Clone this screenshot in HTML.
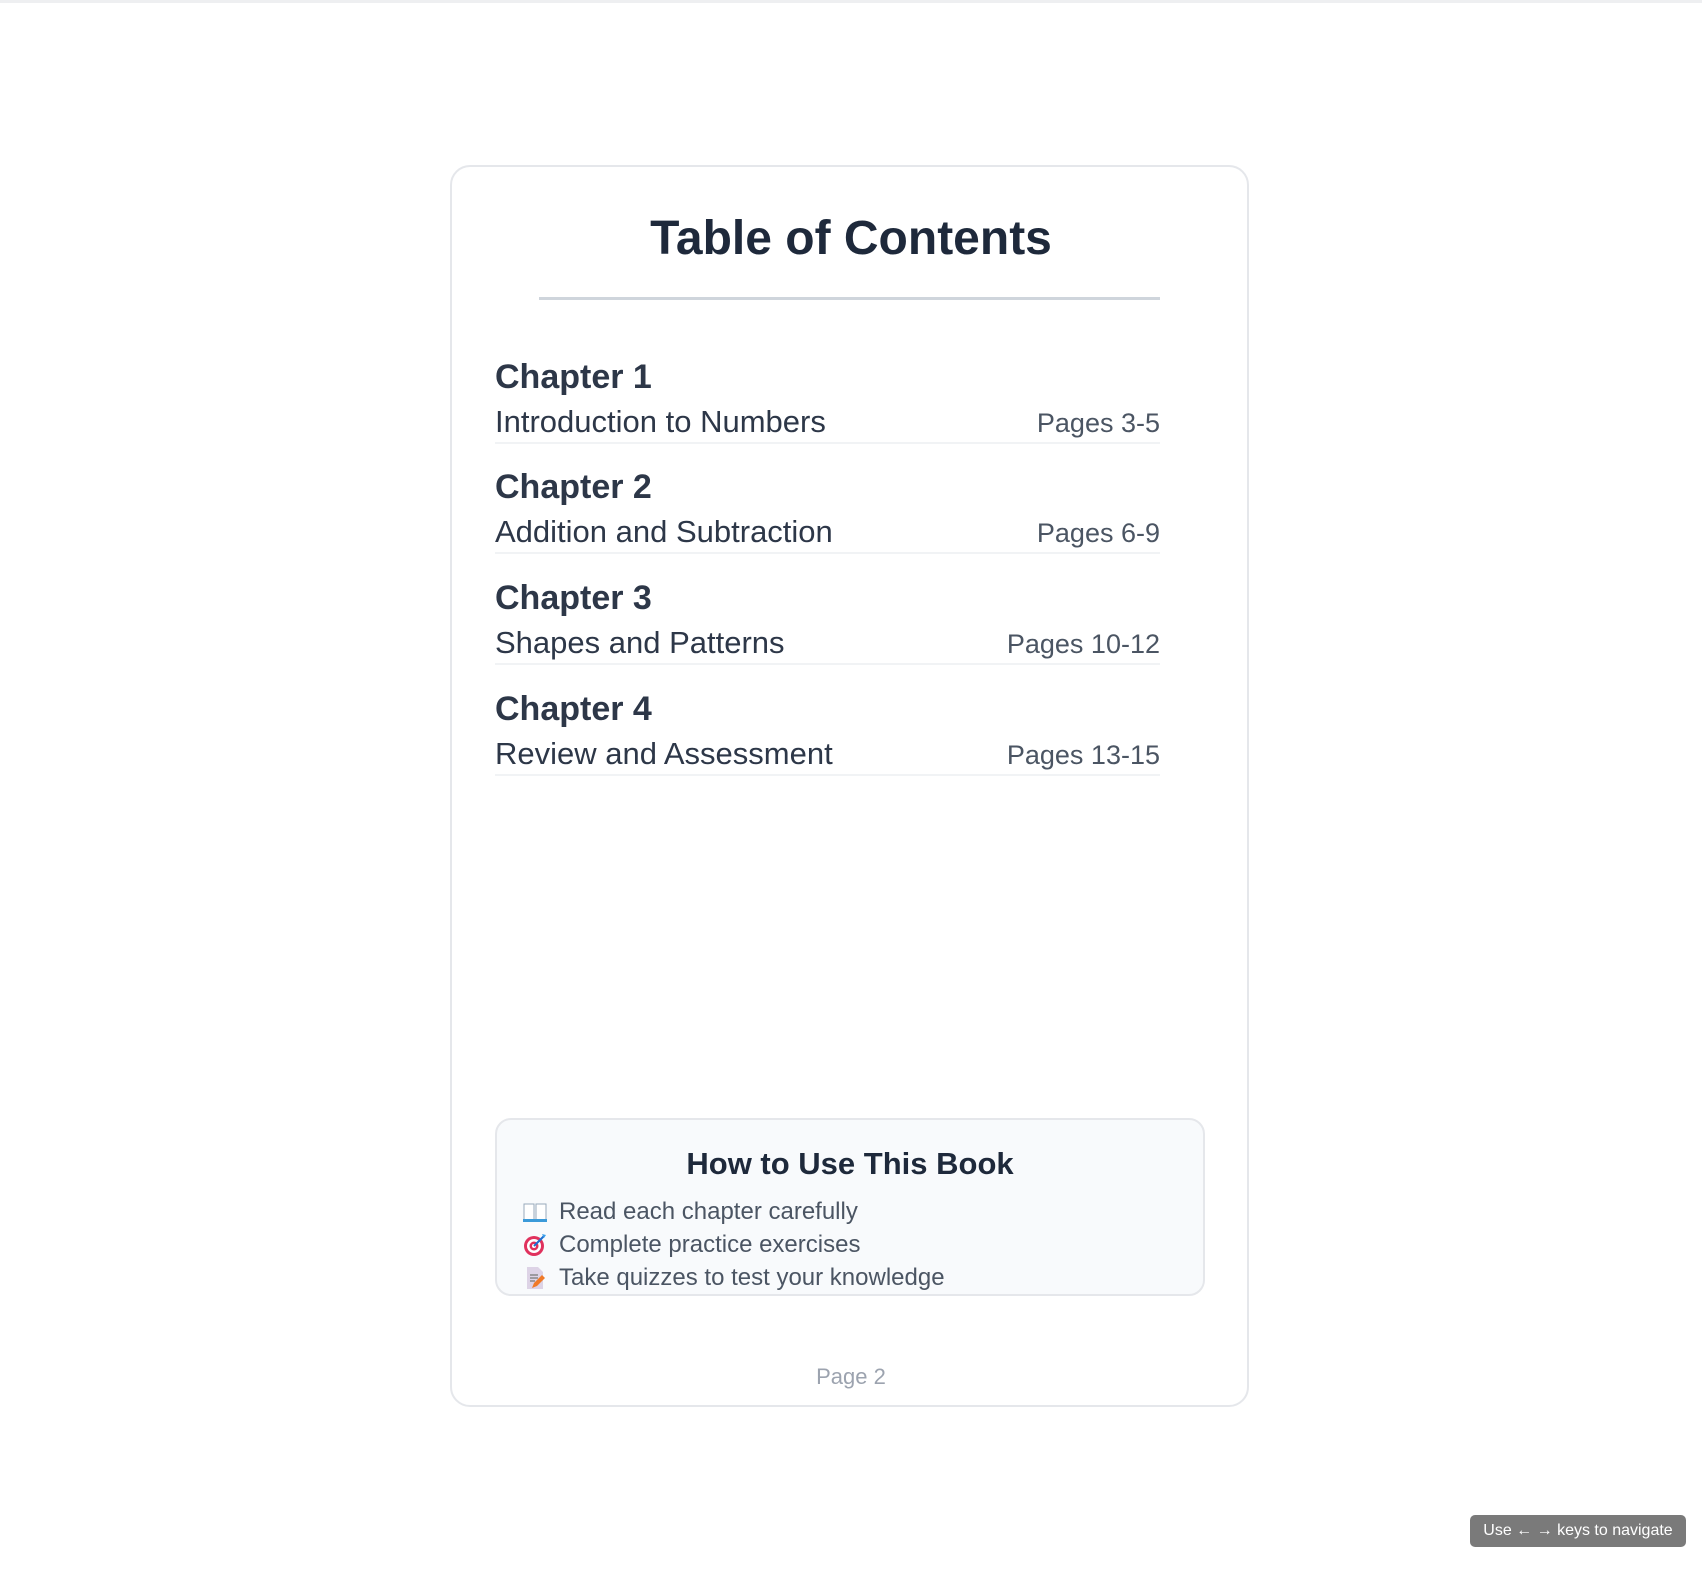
<!DOCTYPE html>
<html><head><meta charset="utf-8"><style>
*{box-sizing:border-box;margin:0;padding:0}
html,body{width:1702px;height:1569px;background:#fff;font-family:"Liberation Sans",Arial,sans-serif;position:relative;overflow:hidden}
.topline{position:absolute;left:0;top:0;width:1702px;height:3px;background:#eeeff1}
.card{position:absolute;left:450px;top:165px;width:799px;height:1242px;border:2px solid #e5e7eb;border-radius:20px;background:#fff}
h1{position:absolute;left:0;width:100%;top:211px;text-align:center;font-size:48px;line-height:56px;font-weight:bold;color:#1e293b}
.div{position:absolute;left:539px;top:297px;width:621px;height:3px;background:#cfd5dc}
.entry{position:absolute;left:495px;width:665px;height:87px;border-bottom:2px solid #f1f3f5}
.entry .t{position:absolute;left:0;top:0;font-size:34px;font-weight:bold;color:#2d3748;line-height:40px}
.entry .s{position:absolute;left:0;top:47px;font-size:31px;color:#2d3748;line-height:36px}
.entry .p{position:absolute;right:0;top:48px;font-size:27px;color:#4b5563;line-height:36px}
.box{position:absolute;left:495px;top:1118px;width:710px;height:178px;background:#f8fafc;border:2px solid #e5e7eb;border-radius:16px}
.box h2{position:absolute;left:0;width:100%;top:26px;text-align:center;font-size:31px;font-weight:bold;color:#1e293b;line-height:36px}
.item{position:absolute;left:26px;font-size:24px;color:#4b5563;line-height:30px}
.item svg{position:absolute;left:0;top:3px}
.item span{position:absolute;left:36px;white-space:nowrap}
.pg{position:absolute;left:0;width:100%;top:1364px;text-align:center;font-size:22px;color:#9ca3af}
.nav{position:absolute;left:1470px;top:1515px;width:216px;height:32px;background:#7a7a7a;border-radius:5px;color:#fff;font-size:16px;line-height:32px;text-align:center}
</style></head><body>
<div class="topline"></div>
<div class="card"></div>
<h1>Table of Contents</h1>
<div class="div"></div>
<div class="entry" style="top:357px"><div class="t">Chapter 1</div><div class="s">Introduction to Numbers</div><div class="p">Pages 3-5</div></div>
<div class="entry" style="top:467px"><div class="t">Chapter 2</div><div class="s">Addition and Subtraction</div><div class="p">Pages 6-9</div></div>
<div class="entry" style="top:578px"><div class="t">Chapter 3</div><div class="s">Shapes and Patterns</div><div class="p">Pages 10-12</div></div>
<div class="entry" style="top:689px"><div class="t">Chapter 4</div><div class="s">Review and Assessment</div><div class="p">Pages 13-15</div></div>
<div class="box">
<h2>How to Use This Book</h2>
<div class="item" style="top:77px"><svg width="24" height="24" viewBox="0 0 24 24"><path d="M1 4h10v16H1z" fill="#fff" stroke="#9ab" stroke-width="1"/><path d="M13 4h10v16H13z" fill="#fff" stroke="#9ab" stroke-width="1"/><rect x="0" y="19" width="24" height="3" fill="#3b9ad9"/></svg><span>Read each chapter carefully</span></div>
<div class="item" style="top:110px"><svg width="24" height="24" viewBox="0 0 24 24"><circle cx="11" cy="13" r="10" fill="#e0315d"/><circle cx="11" cy="13" r="7" fill="#fff"/><circle cx="11" cy="13" r="4.5" fill="#e0315d"/><circle cx="11" cy="13" r="2" fill="#fff"/><path d="M11 13L21 3" stroke="#1d6fd1" stroke-width="2"/><path d="M19 1l4 1-2 3z" fill="#3ba0ea"/></svg><span>Complete practice exercises</span></div>
<div class="item" style="top:143px"><svg width="24" height="24" viewBox="0 0 24 24"><path d="M4 1h11l5 5v17H4z" fill="#ddd3e6"/><path d="M7 9h8M7 12h8M7 15h5" stroke="#777" stroke-width="1.3"/><path d="M9 22l2-5 8-8 3 3-8 8z" fill="#f07a28"/></svg><span>Take quizzes to test your knowledge</span></div>
</div>
<div class="pg">Page 2</div>
<div class="nav">Use ← → keys to navigate</div>
</body></html>
